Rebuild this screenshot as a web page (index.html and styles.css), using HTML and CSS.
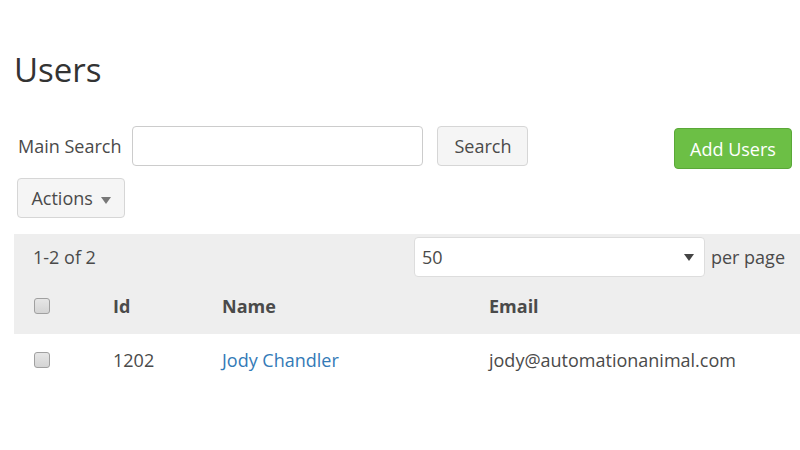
FILE: index.html
```html
<!DOCTYPE html>
<html>
<head>
<meta charset="utf-8">
<link rel="stylesheet" href="styles.css">
</head>
<body>
<div class="page">
  <h1 class="title">Users</h1>
  <div class="toolbar">
    <div class="search">
      <label class="search-label">Main Search</label>
      <input class="search-input" type="text">
      <button class="btn">Search</button>
    </div>
    <button class="btn btn-green">Add Users</button>
  </div>
  <div class="actions-row">
    <button class="btn btn-actions">Actions <span class="caret"></span></button>
  </div>
  <div class="band">
    <div class="pager">
      <span class="count">1-2 of 2</span>
      <div class="per">
        <div class="select"><span>50</span><span class="caret dark"></span></div>
        <span>per page</span>
      </div>
    </div>
    <div class="row head">
      <div><span class="cb"></span></div>
      <div>Id</div>
      <div>Name</div>
      <div>Email</div>
    </div>
  </div>
  <div class="row body">
    <div><span class="cb"></span></div>
    <div>1202</div>
    <div><a class="link">Jody Chandler</a></div>
    <div>jody@automationanimal.com</div>
  </div>
</div>
</body>
</html>
```
FILE: styles.css
```css
html, body { margin: 0; padding: 0; background: #fff; }
body {
  font-family: "Open Sans", "Lato", sans-serif;
  font-size: 18px;
  color: #4a4a4a;
}
.page { padding-left: 14px; }
.title {
  margin: 0;
  padding-top: 50px;
  font-size: 33px;
  font-weight: 400;
  color: #333;
  line-height: 40px;
  height: 76px;
}
.toolbar {
  display: flex;
  justify-content: space-between;
  align-items: flex-start;
  padding-right: 8px;
}
.search { display: flex; align-items: center; }
.search-label { margin-left: 4px; margin-right: 11px; }
.search-input {
  width: 291px;
  height: 40px;
  box-sizing: border-box;
  border: 1px solid #ccc;
  border-radius: 4px;
  margin: 0 14px 0 0;
}
.btn {
  font-family: inherit;
  font-size: 18px;
  color: #4a4a4a;
  background: #f5f5f5;
  border: 1px solid #d6d6d6;
  border-radius: 4px;
  height: 40px;
  padding: 0 16px;
  cursor: pointer;
}
.btn-green {
  margin-top: 2px;
  height: 41px;
  width: 118px;
  padding: 0;
  background: #6cbf45;
  border-color: #5aa838;
  color: #fff;
}
.actions-row { padding-top: 9px; padding-bottom: 16px; margin-left: 3px; }
.btn-actions { width: 108px; padding: 0; }
.caret {
  display: inline-block;
  width: 0; height: 0;
  border-left: 5px solid transparent;
  border-right: 5px solid transparent;
  border-top: 7px solid #777;
  vertical-align: middle;
  margin-left: 3px;
}
.caret.dark { border-top-color: #444; }
.band { background: #eee; }
.pager {
  display: flex;
  justify-content: space-between;
  align-items: center;
  padding: 3px 15px 3px 19px;
  height: 40px;
}
.per { display: flex; align-items: center; gap: 6px; }
.select {
  width: 291px;
  height: 40px;
  box-sizing: border-box;
  background: #fff;
  border: 1px solid #ddd;
  border-radius: 4px;
  display: flex;
  justify-content: space-between;
  align-items: center;
  padding: 0 10px 0 7px;
}
.row {
  display: grid;
  grid-template-columns: 79px 109px 267px 1fr;
  align-items: center;
  padding-left: 20px;
}
.head { height: 52px; font-weight: 700; padding-bottom: 2px; }
.body { height: 52px; }
.cb {
  display: block;
  width: 14px; height: 14px;
  border: 1px solid #a0a0a0;
  border-radius: 3px;
  background: linear-gradient(#e6e6e6, #d4d4d4);
}
.link { color: #337ab7; text-decoration: none; }
```
